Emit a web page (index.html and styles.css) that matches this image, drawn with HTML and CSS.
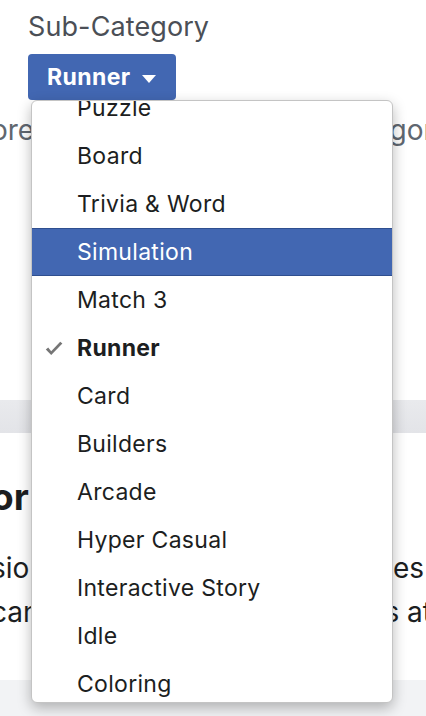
FILE: index.html
```html
<!DOCTYPE html>
<html>
<head>
<meta charset="utf-8">
<link rel="stylesheet" href="styles.css">
</head>
<body>
<div class="page">
  <section class="top">
    <div class="label">Sub-Category</div>
    <button class="btn">Runner <span class="caret"></span></button>
    <div class="line muted"><span class="cut-l">ore</span><span class="cut-r">gor</span></div>
  </section>
  <div class="band"></div>
  <section class="info">
    <h2 class="heading"><span class="cut-l">or</span></h2>
    <div class="line para"><span class="cut-l">sio</span><span class="end-a">es</span></div>
    <div class="line para"><span class="cut-l">can</span><span class="end-b">s at</span></div>
  </section>
  <div class="foot"></div>

  <div class="menu">
    <ul class="list">
      <li class="item">Puzzle</li>
      <li class="item">Board</li>
      <li class="item">Trivia &amp; Word</li>
      <li class="item active">Simulation</li>
      <li class="item">Match 3</li>
      <li class="item checked"><svg class="check" viewBox="0 0 18 15" width="18" height="15"><path d="M0.8 8.4 L6.2 14 L17.4 2.6 L15.2 0.8 L6.2 10.2 L3.2 6.6 Z" fill="#767676"/></svg>Runner</li>
      <li class="item">Card</li>
      <li class="item">Builders</li>
      <li class="item">Arcade</li>
      <li class="item">Hyper Casual</li>
      <li class="item">Interactive Story</li>
      <li class="item">Idle</li>
      <li class="item">Coloring</li>
    </ul>
  </div>
</div>
</body>
</html>
```
FILE: styles.css
```css
* { box-sizing: border-box; }
html, body { margin: 0; padding: 0; }
body {
  font-family: Inter, "Noto Sans", sans-serif;
  background: #ffffff;
  width: 426px;
  height: 716px;
  overflow: hidden;
}
.page {
  position: relative;
  width: 426px;
  height: 716px;
  overflow: hidden;
}
.top {
  padding: 10px 0 0 28px;
  height: 400px;
}
.label {
  font-size: 27px;
  line-height: 34px;
  color: #4b4f56;
  letter-spacing: 0.1px;
}
.btn {
  margin-top: 10px;
  display: inline-flex;
  align-items: center;
  gap: 11px;
  height: 46px;
  width: 148px;
  padding: 0 0 0 19px;
  border: none;
  border-radius: 4px;
  background: #4267b2;
  color: #fff;
  font-family: Inter, "Noto Sans", sans-serif;
  font-weight: 700;
  font-size: 23px;
  letter-spacing: 0.4px;
}
.caret {
  width: 0;
  height: 0;
  border-left: 7px solid transparent;
  border-right: 7px solid transparent;
  border-top: 8px solid #fff;
  margin-top: 3px;
}
.line {
  display: flex;
  justify-content: space-between;
  white-space: nowrap;
  margin-left: -28px;
}
.muted {
  margin-top: 10px;
  font-size: 28px;
  line-height: 40px;
  color: #606770;
}
.cut-l { margin-left: -9px; }
.cut-r { margin-right: -8px; }
.band {
  height: 33px;
  background: linear-gradient(#e9eaed, #e3e4e8);
}
.info {
  height: 247px;
  padding-top: 42px;
}
.heading {
  margin: 0;
  font-size: 37px;
  line-height: 44px;
  font-weight: 700;
  color: #1c1e21;
}
.para {
  margin-left: 0;
  font-size: 28px;
  line-height: 44px;
  color: #1c1e21;
}
.info .para:first-of-type { margin-top: 27px; }
.end-a { margin-right: 2px; }
.end-b { margin-right: -6px; }
.foot {
  height: 40px;
  background: #f2f3f5;
}
.menu {
  position: absolute;
  left: 31px;
  top: 100px;
  width: 362px;
  height: 603px;
  background: #fff;
  border: 1px solid #c4c4c4;
  border-radius: 6px;
  box-shadow: 0 5px 14px rgba(0,0,0,0.28);
  overflow: hidden;
}
.list {
  list-style: none;
  margin: -17px 0 0 0;
  padding: 0;
}
.item {
  position: relative;
  height: 48px;
  display: flex;
  align-items: center;
  padding-left: 45px;
  font-size: 23px;
  color: #1c1e21;
  letter-spacing: 0.3px;
}
.item.active {
  background: #4267b2;
  color: #fff;
  box-shadow: inset 0 1px 0 #2f4f8f, inset 0 -1px 0 #2f4f8f;
}
.item.checked { font-weight: 700; }
.check {
  position: absolute;
  left: 13px;
  top: 17px;
}
```
